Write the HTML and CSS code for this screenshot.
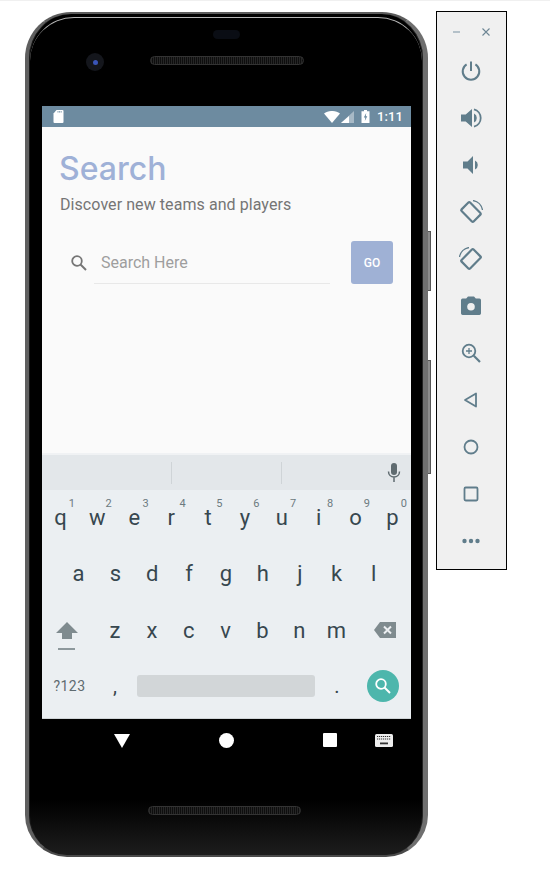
FILE: index.html
```html
<!DOCTYPE html>
<html lang="en">
<head>
<meta charset="utf-8">
<title>Search</title>
<link rel="stylesheet" href="styles.css">
</head>
<body>
<main class="desktop">
  <section class="phone">
    <span class="btn-side btn-power"></span>
    <span class="btn-side btn-volume"></span>
    <div class="bezel-top">
      <span class="earpiece"></span>
      <span class="camera"><span class="lens"></span></span>
      <span class="speaker speaker-top"></span>
    </div>
    <div class="screen">
      <div class="statusbar">
        <svg class="ic-sd" viewBox="0 0 11 13"><path d="M3.500 0H9.500a1 1 0 0 1 1 1V12a1 1 0 0 1-1 1H1.500a1 1 0 0 1-1-1V3.500z" fill="#fff"/><path d="M5 1v1.600M6.600 1v1.600M8.200 1v1.600" stroke="#6d8ba0" stroke-width=".8"/></svg>
        <span class="status-right">
          <svg class="ic-wifi" viewBox="0 0 16 12"><path d="M0 2.600C4.500-.9 11.500-.9 16 2.600L8 12z" fill="#fff"/></svg>
          <svg class="ic-signal" viewBox="0 0 13 12"><path d="M13 0V12H0z" fill="#fff" fill-opacity=".4"/><path d="M8 5V12H0L8 5z" fill="#fff"/></svg>
          <svg class="ic-batt" viewBox="0 0 9 13"><path d="M3 0H6V1.200H8.500V13H.5V1.200H3z" fill="#fff"/><path d="M5.200 3 2.800 7.500H4.300L3.800 11 6.300 6.200H4.800z" fill="#6d8ba0"/></svg>
          <span class="clock">1:11</span>
        </span>
      </div>
      <div class="app">
        <h1 class="title">Search</h1>
        <p class="subtitle">Discover new teams and players</p>
        <div class="search-row">
          <svg class="ic-search" viewBox="0 0 18 18"><circle cx="7" cy="7" r="4.800" fill="none" stroke="#757575" stroke-width="1.800"/><path d="M10.500 10.500 16 16" stroke="#757575" stroke-width="2"/></svg>
          <div class="field">Search Here</div>
          <button class="go">GO</button>
        </div>
      </div>
      <div class="keyboard">
        <div class="suggest">
          <span class="slot slot-left"></span><span class="slot slot-mid"></span>
          <span class="slot slot-mic">
            <svg class="ic-mic" viewBox="0 0 14 19"><rect x="4" y="0" width="6" height="12" rx="3" fill="#5f6b70"/><path d="M1.500 8.500c0 3.500 2.500 5.500 5.500 5.500s5.500-2 5.500-5.500M7 14v5" fill="none" stroke="#5f6b70" stroke-width="1.500"/></svg>
          </span>
        </div>
        <div class="row row-1">
          <span class="key">q<sup class="num">1</sup></span><span class="key">w<sup class="num">2</sup></span><span class="key">e<sup class="num">3</sup></span><span class="key">r<sup class="num">4</sup></span><span class="key">t<sup class="num">5</sup></span><span class="key">y<sup class="num">6</sup></span><span class="key">u<sup class="num">7</sup></span><span class="key">i<sup class="num">8</sup></span><span class="key">o<sup class="num">9</sup></span><span class="key">p<sup class="num">0</sup></span>
        </div>
        <div class="row row-2">
          <span class="key">a</span><span class="key">s</span><span class="key">d</span><span class="key">f</span><span class="key">g</span><span class="key">h</span><span class="key">j</span><span class="key">k</span><span class="key">l</span>
        </div>
        <div class="row row-3">
          <span class="key key-wide">
            <svg class="ic-shift" viewBox="0 0 22 28"><path d="M11 0 22 11H16V17H6V11H0z" fill="#7f8b8f"/><rect x="2" y="26" width="17" height="2" fill="#8d989c"/></svg>
          </span>
          <span class="key">z</span><span class="key">x</span><span class="key">c</span><span class="key">v</span><span class="key">b</span><span class="key">n</span><span class="key">m</span>
          <span class="key key-wide">
            <svg class="ic-del" viewBox="0 0 22 16"><path d="M6 0H22V16H6L0 8z" fill="#7f8b8f"/><path d="M10 4.500 17 11.500M17 4.500 10 11.500" stroke="#eceff2" stroke-width="2"/></svg>
          </span>
        </div>
        <div class="row row-4">
          <span class="key key-sym">?123</span>
          <span class="key key-comma">,</span>
          <span class="space"></span>
          <span class="key key-dot">.</span>
          <span class="enter">
            <svg class="ic-enter" viewBox="0 0 18 18"><circle cx="7" cy="7" r="4.800" fill="none" stroke="#fff" stroke-width="1.800"/><path d="M10.500 10.500 16 16" stroke="#fff" stroke-width="2"/></svg>
          </span>
        </div>
      </div>
    </div>
    <div class="navbar">
      <svg class="ic-back" viewBox="0 0 16 14"><path d="M0 0H16L8 14z" fill="#fff"/></svg>
      <span class="nav-home"></span>
      <span class="nav-recent"></span>
      <svg class="ic-kbd" viewBox="0 0 18 13"><rect width="18" height="13" rx="1.500" fill="#eee"/><path d="M2 2.500h14M2 5h14" stroke="#333" stroke-width="1.200" stroke-dasharray="1.200 .8"/><rect x="5" y="8.500" width="8" height="1.800" fill="#333"/></svg>
      <span class="speaker speaker-bottom"></span>
    </div>
  </section>

  <aside class="toolbar">
    <div class="win-controls">
      <svg class="ic-min" viewBox="0 0 10 10"><path d="M1 5H8" stroke="#8da2af" stroke-width="1.200"/></svg>
      <svg class="ic-close" viewBox="0 0 10 10"><path d="M1.500 1.500 8.500 8.500M8.500 1.500 1.500 8.500" stroke="#6d8694" stroke-width="1.100"/></svg>
    </div>
    <div class="tools">
      <svg class="tool" viewBox="0 0 24 24"><path d="M12 2.500V12" stroke="#607d8b" stroke-width="2" fill="none"/><path d="M7.600 5.300A8.300 8.300 0 1 0 16.400 5.300" stroke="#607d8b" stroke-width="2" fill="none"/></svg>
      <svg class="tool" viewBox="0 0 24 24"><path d="M2 8.500V15.500H6.700L13 21V3L6.700 8.500z" fill="#607d8b"/><path d="M15 7.500a5 5 0 0 1 0 9z" fill="#607d8b"/><path d="M15 3.300a9 9 0 0 1 0 17.400" stroke="#607d8b" stroke-width="1.800" fill="none"/></svg>
      <svg class="tool" viewBox="0 0 24 24"><path d="M4 8.500V15.500H8.500L14 21V3L8.500 8.500z" fill="#607d8b"/><path d="M16 7.500a5 5 0 0 1 0 9z" fill="#607d8b"/></svg>
      <svg class="tool" viewBox="0 0 24 24"><rect x="3.500" y="6" width="17" height="12" rx="1.200" transform="rotate(45 12 12)" fill="none" stroke="#607d8b" stroke-width="2.200"/><path d="M14 .5A11.500 11.500 0 0 1 23.500 10" fill="none" stroke="#607d8b" stroke-width="1.300"/></svg>
      <svg class="tool" viewBox="0 0 24 24"><rect x="3.500" y="6" width="17" height="12" rx="1.200" transform="rotate(-45 12 12)" fill="none" stroke="#607d8b" stroke-width="2.200"/><path d="M.5 10A11.500 11.500 0 0 1 10 .5" fill="none" stroke="#607d8b" stroke-width="1.300"/></svg>
      <svg class="tool" viewBox="0 0 24 24"><path d="M9 2.500 7.200 4.500H3.500A1.800 1.800 0 0 0 2 6.300V19.500A1.800 1.800 0 0 0 3.500 21H20.500A1.800 1.800 0 0 0 22 19.500V6.300A1.800 1.800 0 0 0 20.500 4.500H16.800L15 2.500z" fill="#607d8b"/><circle cx="12" cy="12.800" r="3.800" fill="#f0f0f0"/></svg>
      <svg class="tool" viewBox="0 0 24 24"><circle cx="10" cy="10" r="6.300" fill="none" stroke="#607d8b" stroke-width="1.800"/><path d="M14.800 14.800 21 21" stroke="#607d8b" stroke-width="2.200"/><path d="M10 7V13M7 10H13" stroke="#607d8b" stroke-width="1.300"/></svg>
      <svg class="tool" viewBox="0 0 24 24"><path d="M6 12 17 5.500V18.500z" fill="none" stroke="#607d8b" stroke-width="1.800" stroke-linejoin="round"/></svg>
      <svg class="tool" viewBox="0 0 24 24"><circle cx="12" cy="12" r="6.500" fill="none" stroke="#607d8b" stroke-width="1.800"/></svg>
      <svg class="tool" viewBox="0 0 24 24"><rect x="5.500" y="5.500" width="13" height="13" rx="1.200" fill="none" stroke="#607d8b" stroke-width="1.800"/></svg>
      <svg class="tool" viewBox="0 0 24 24"><circle cx="5.500" cy="12" r="2.200" fill="#607d8b"/><circle cx="12" cy="12" r="2.200" fill="#607d8b"/><circle cx="18.500" cy="12" r="2.200" fill="#607d8b"/></svg>
    </div>
  </aside>
</main>
</body>
</html>
```

FILE: styles.css
```css
* { box-sizing: border-box; }

html, body { margin: 0; padding: 0; background: #fff; }

body {
  width: 550px;
  height: 872px;
  overflow: hidden;
  font-family: Roboto, "Liberation Sans", sans-serif;
  border-top: 1px solid #f0f0f0;
}

.desktop {
  display: flex;
  align-items: flex-start;
  padding: 10px 0 0 25px;
  gap: 8px;
}

/* Phone body */
.phone {
  position: relative;
  flex: none;
  width: 403px;
  height: 845px;
  margin-top: 1px;
  padding: 0 13px;
  display: flex;
  flex-direction: column;
  background: linear-gradient(to top, #1d1d1d, #000 55px);
  border-style: solid;
  border-width: 2px 5px 2px 4px;
  border-color: #5c5c5c #6f6f6f #4a4a4a #5f5f5f;
  border-radius: 46px 46px 42px 42px;
  box-shadow: inset 1px 0 0 #1a1a1a, inset -1px 0 0 #222;
}

.phone::before {
  content: "";
  position: absolute;
  inset: 3px 1px auto 1px;
  height: 60px;
  border-top: 1px solid #b5b5b5;
  border-radius: 44px 44px 0 0;
}

.btn-side {
  position: absolute;
  left: 399px;
  width: 3px;
  background: #8c8c8c;
  border: 1px solid #555;
  border-left: 0;
}
.btn-power { top: 217px; height: 60px; }
.btn-volume { top: 346px; height: 114px; }

.bezel-top {
  position: relative;
  flex: none;
  height: 92px;
}

.earpiece {
  position: absolute;
  left: 171px;
  top: 16px;
  width: 27px;
  height: 9px;
  border-radius: 5px;
  background: #0a0d14;
}

.camera {
  position: absolute;
  left: 44px;
  top: 39px;
  width: 18px;
  height: 18px;
  border-radius: 50%;
  background: #14161c;
  display: flex;
  align-items: center;
  justify-content: center;
}

.lens {
  width: 5px;
  height: 5px;
  border-radius: 50%;
  background: #3a55b8;
}

.speaker {
  position: absolute;
  height: 9px;
  border-radius: 5px;
  background: repeating-linear-gradient(90deg, #262626 0 1px, #0e0e0e 1px 2px);
  border: 1px solid #333;
}
.speaker-top { left: 108px; top: 42px; width: 154px; }
.speaker-bottom { left: 106px; top: 87px; width: 153px; }

/* Screen */
.screen {
  flex: none;
  width: 369px;
  height: 613px;
  display: flex;
  flex-direction: column;
  background: #fafafa;
}

.statusbar {
  flex: none;
  height: 21px;
  padding: 0 8px 0 11px;
  background: #6d8ba0;
  display: flex;
  align-items: center;
  justify-content: space-between;
  color: #fff;
}

.status-right { display: flex; align-items: center; }

.ic-sd { width: 11px; height: 13px; margin-top: -1px; }
.ic-wifi { width: 16px; height: 12px; }
.ic-signal { width: 13px; height: 12px; margin-left: 1px; }
.ic-batt { width: 9px; height: 13px; margin-left: 7px; }

.clock {
  margin-left: 7px;
  font-size: 13px;
  font-weight: 500;
  letter-spacing: .1px;
}

.app {
  flex: 1;
  padding: 22px 18px 0;
  min-height: 0;
}

.title {
  margin: 0 0 0 -1px;
  font-family: Inter, sans-serif;
  font-size: 32px;
  line-height: 40px;
  font-weight: 500;
  color: #9fb1d7;
}

.subtitle {
  margin: 4px 0 0;
  font-size: 16px;
  line-height: 24px;
  letter-spacing: .07px;
  color: #757575;
}

.search-row {
  display: flex;
  align-items: flex-start;
  margin-top: 24px;
}

.ic-search {
  flex: none;
  width: 18px;
  height: 18px;
  margin: 13px 0 0 10px;
}

.field {
  flex: none;
  width: 236px;
  height: 43px;
  margin-left: 6px;
  padding: 0 0 0 7px;
  line-height: 44px;
  font-size: 16px;
  color: #9e9e9e;
  border-bottom: 1px solid #e8e8e8;
}

.go {
  flex: none;
  width: 42px;
  height: 43px;
  margin-left: 21px;
  padding: 0;
  border: 0;
  border-radius: 3px;
  background: #9fb1d5;
  color: #fff;
  font-family: Roboto, sans-serif;
  font-size: 12px;
  font-weight: 500;
}

/* Keyboard */
.keyboard {
  flex: none;
  height: 266px;
  background: #ebeff2;
  border-bottom: 1px solid #cfd4d7;
  display: flex;
  flex-direction: column;
  color: #37474f;
}

.suggest {
  flex: none;
  height: 37px;
  border-top: 2px solid #f0f2f4;
  background: #e3e7ea;
  display: flex;
  align-items: center;
}

.slot {
  flex: none;
  height: 22px;
  display: flex;
  align-items: center;
  justify-content: center;
}
.slot-left { width: 129px; }
.slot-mid {
  width: 111px;
  border-left: 1px solid #cfd4d7;
  border-right: 1px solid #cfd4d7;
}
.slot-mic { flex: 1; justify-content: flex-end; padding-right: 10px; }
.ic-mic { width: 14px; height: 19px; }

.row {
  flex: none;
  height: 56.300px;
  display: flex;
  align-items: center;
}
.row-2 { padding: 0 18px; }
.row-4 { height: 55px; }

.key {
  position: relative;
  flex: none;
  width: 36.900px;
  text-align: center;
  font-size: 22px;
  line-height: 30px;
}

.num {
  position: absolute;
  top: -5px;
  right: 4px;
  font-size: 11px;
  line-height: 12px;
  color: #6c7a80;
  vertical-align: baseline;
}

.key-wide {
  width: 54.500px;
  display: flex;
  justify-content: center;
}
.ic-shift { width: 22px; height: 28px; margin-top: 10px; margin-left: -5px; }
.ic-del { width: 22px; height: 16px; margin: 0 0 2px 6px; }

.key-sym {
  width: 55px;
  font-size: 14px;
  letter-spacing: .4px;
  color: #5f6b70;
}
.key-comma {
  width: 36px;
  font-size: 20px;
}
.space {
  flex: none;
  width: 178px;
  height: 22px;
  margin-left: 4px;
  border-radius: 3px;
  background: #d2d6d8;
}
.key-dot { width: 44px; font-size: 20px; }
.enter {
  flex: none;
  width: 32px;
  height: 32px;
  margin-left: 8px;
  border-radius: 50%;
  background: #4db6ac;
  display: flex;
  align-items: center;
  justify-content: center;
}
.ic-enter { width: 18px; height: 18px; }

/* Nav bar */
.navbar {
  position: relative;
  flex: 1;
  display: flex;
  align-items: flex-start;
}

.ic-back { width: 16px; height: 14px; margin: 15px 0 0 72px; }
.nav-home {
  width: 15px;
  height: 15px;
  margin: 14px 0 0 89px;
  border-radius: 50%;
  background: #fff;
}
.nav-recent {
  width: 14px;
  height: 14px;
  margin: 14px 0 0 89px;
  border-radius: 1px;
  background: #fff;
}
.ic-kbd { width: 18px; height: 13px; margin: 15px 0 0 38px; }

/* Emulator toolbar */
.toolbar {
  flex: none;
  width: 71px;
  height: 559px;
  background: #f0f0f0;
  border: 1px solid #000;
  display: flex;
  flex-direction: column;
}

.win-controls {
  flex: none;
  height: 47px;
  padding: 15px 0 0 15px;
  display: flex;
  gap: 19px;
}
.ic-min, .ic-close { width: 10px; height: 10px; }

.tools {
  display: flex;
  flex-direction: column;
  align-items: center;
  gap: 23px;
  padding-right: 1px;
}
.tool {
  flex: none;
  width: 24px;
  height: 24px;
}
```
